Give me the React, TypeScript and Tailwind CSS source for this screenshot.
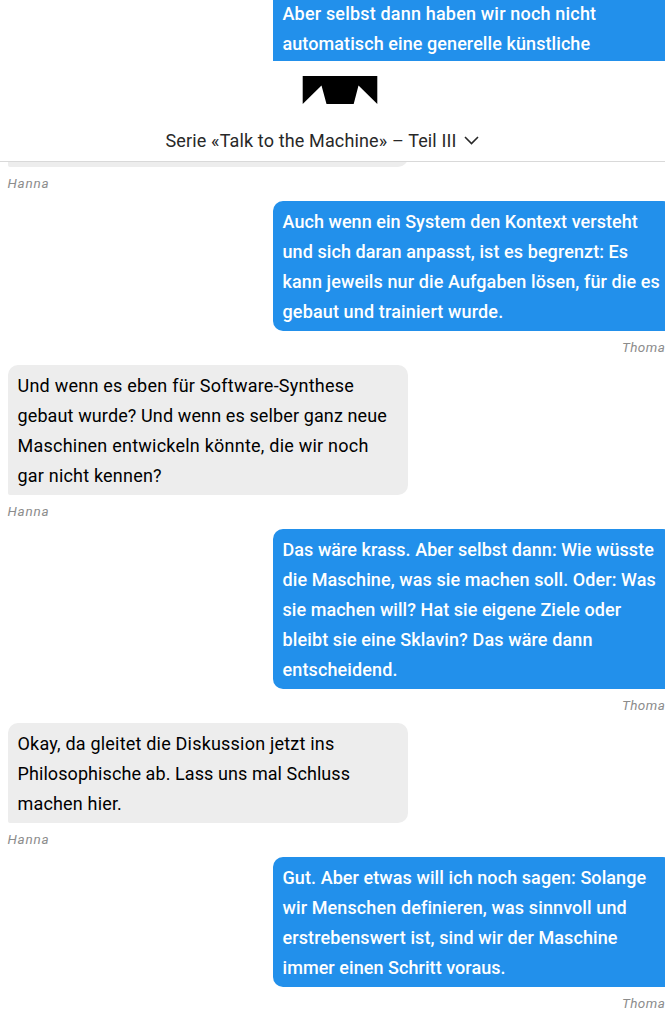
type Line = { text: string; tracking: string };
type Message = { author: 'Hanna' | 'Thomas'; lines: Line[] };

const messages: Message[] = [
  {
    author: 'Thomas',
    lines: [
      { text: 'Auch wenn ein System den Kontext versteht', tracking: 'tracking-[0.05px]' },
      { text: 'und sich daran anpasst, ist es begrenzt: Es', tracking: 'tracking-[0.08px]' },
      { text: 'kann jeweils nur die Aufgaben lösen, für die es', tracking: 'tracking-[0.1px]' },
      { text: 'gebaut und trainiert wurde.', tracking: 'tracking-[0.14px]' },
    ],
  },
  {
    author: 'Hanna',
    lines: [
      { text: 'Und wenn es eben für Software-Synthese', tracking: 'tracking-[0.24px]' },
      { text: 'gebaut wurde? Und wenn es selber ganz neue', tracking: 'tracking-[0.12px]' },
      { text: 'Maschinen entwickeln könnte, die wir noch', tracking: 'tracking-[0.23px]' },
      { text: 'gar nicht kennen?', tracking: 'tracking-[0.2px]' },
    ],
  },
  {
    author: 'Thomas',
    lines: [
      { text: 'Das wäre krass. Aber selbst dann: Wie wüsste', tracking: 'tracking-[0.06px]' },
      { text: 'die Maschine, was sie machen soll. Oder: Was', tracking: 'tracking-[0.08px]' },
      { text: 'sie machen will? Hat sie eigene Ziele oder', tracking: 'tracking-[0.05px]' },
      { text: 'bleibt sie eine Sklavin? Das wäre dann', tracking: 'tracking-[0.12px]' },
      { text: 'entscheidend.', tracking: 'tracking-[0.12px]' },
    ],
  },
  {
    author: 'Hanna',
    lines: [
      { text: 'Okay, da gleitet die Diskussion jetzt ins', tracking: 'tracking-[0.2px]' },
      { text: 'Philosophische ab. Lass uns mal Schluss', tracking: 'tracking-[0.08px]' },
      { text: 'machen hier.', tracking: 'tracking-[0.17px]' },
    ],
  },
  {
    author: 'Thomas',
    lines: [
      { text: 'Gut. Aber etwas will ich noch sagen: Solange', tracking: 'tracking-[0.08px]' },
      { text: 'wir Menschen definieren, was sinnvoll und', tracking: 'tracking-[0.11px]' },
      { text: 'erstrebenswert ist, sind wir der Maschine', tracking: 'tracking-[0.1px]' },
      { text: 'immer einen Schritt voraus.', tracking: 'tracking-[0.06px]' },
    ],
  },
];

function Lines({ lines }: { lines: Line[] }) {
  return (
    <>
      {lines.map((line) => (
        <p key={line.text} className={`whitespace-nowrap ${line.tracking}`}>
          {line.text}
        </p>
      ))}
    </>
  );
}

function Author({ name }: { name: 'Hanna' | 'Thomas' }) {
  const tracking = name === 'Hanna' ? 'tracking-[0.75px]' : 'tracking-[0.45px]';
  return <p className={`h-[34px] text-[13.5px] leading-[33px] text-[#8c8c8c] italic ${tracking}`}>{name}</p>;
}

function Bubble({ message }: { message: Message }) {
  const own = message.author === 'Thomas';
  return (
    <article className={`w-[400px] shrink-0 ${own ? 'ml-[265px] text-right' : ''}`}>
      <div
        className={`px-[10px] pt-[6px] pb-[4px] text-left text-[18px] leading-[30px] ${
          own
            ? 'rounded-[10px] rounded-br-[2px] bg-[#2290eb] font-medium text-white'
            : 'rounded-[10px] rounded-bl-[2px] bg-[#ededed] text-black'
        }`}
      >
        <Lines lines={message.lines} />
      </div>
      <Author name={message.author} />
    </article>
  );
}

export default function App() {
  return (
    <div className="flex h-[1029px] w-[665px] flex-col overflow-hidden bg-white font-['Roboto',sans-serif]">
      <div className="ml-[272.5px] h-[61px] w-[400px] shrink-0 bg-[#2290eb] px-[10px] text-[18px] leading-[30px] font-medium text-white">
        <div className="-mt-px">
          <Lines
            lines={[
              { text: 'Aber selbst dann haben wir noch nicht', tracking: 'tracking-[0.18px]' },
              { text: 'automatisch eine generelle künstliche', tracking: 'tracking-[0.08px]' },
            ]}
          />
        </div>
      </div>
      <header className="flex h-[101px] shrink-0 flex-col border-b border-[#d9d9d9]">
        <svg className="mt-[15px] ml-[302px] shrink-0" width="76" height="28" viewBox="0 0 76 28">
          <path d="M0.7 0H75.3V28L56.5 9.5L51.7 28H24.5L19.5 9.5L0.7 28Z" fill="#000" />
        </svg>
        <button className="mt-[22px] ml-[165.5px] flex h-[30px] items-center gap-[7px] self-start whitespace-nowrap text-[18px] leading-[30px] text-[#282828]">
          <span className="tracking-[0.14px]">Serie «Talk to the Machine» – Teil III</span>
          <svg className="-mt-[2px]" width="15" height="9" viewBox="0 0 15 9" fill="none" stroke="#282828" strokeWidth="1.6">
            <path d="M1 1L7.5 7.5L14 1" />
          </svg>
        </button>
      </header>
      <main className="flex flex-col pl-[7.5px]">
        <div className="h-[5px] w-[400px] shrink-0 overflow-hidden">
          <div className="-mt-[15px] h-5 rounded-[10px] rounded-bl-[2px] bg-[#ededed]" />
        </div>
        <Author name="Hanna" />
        {messages.map((message) => (
          <Bubble key={message.lines[0].text} message={message} />
        ))}
      </main>
    </div>
  );
}
